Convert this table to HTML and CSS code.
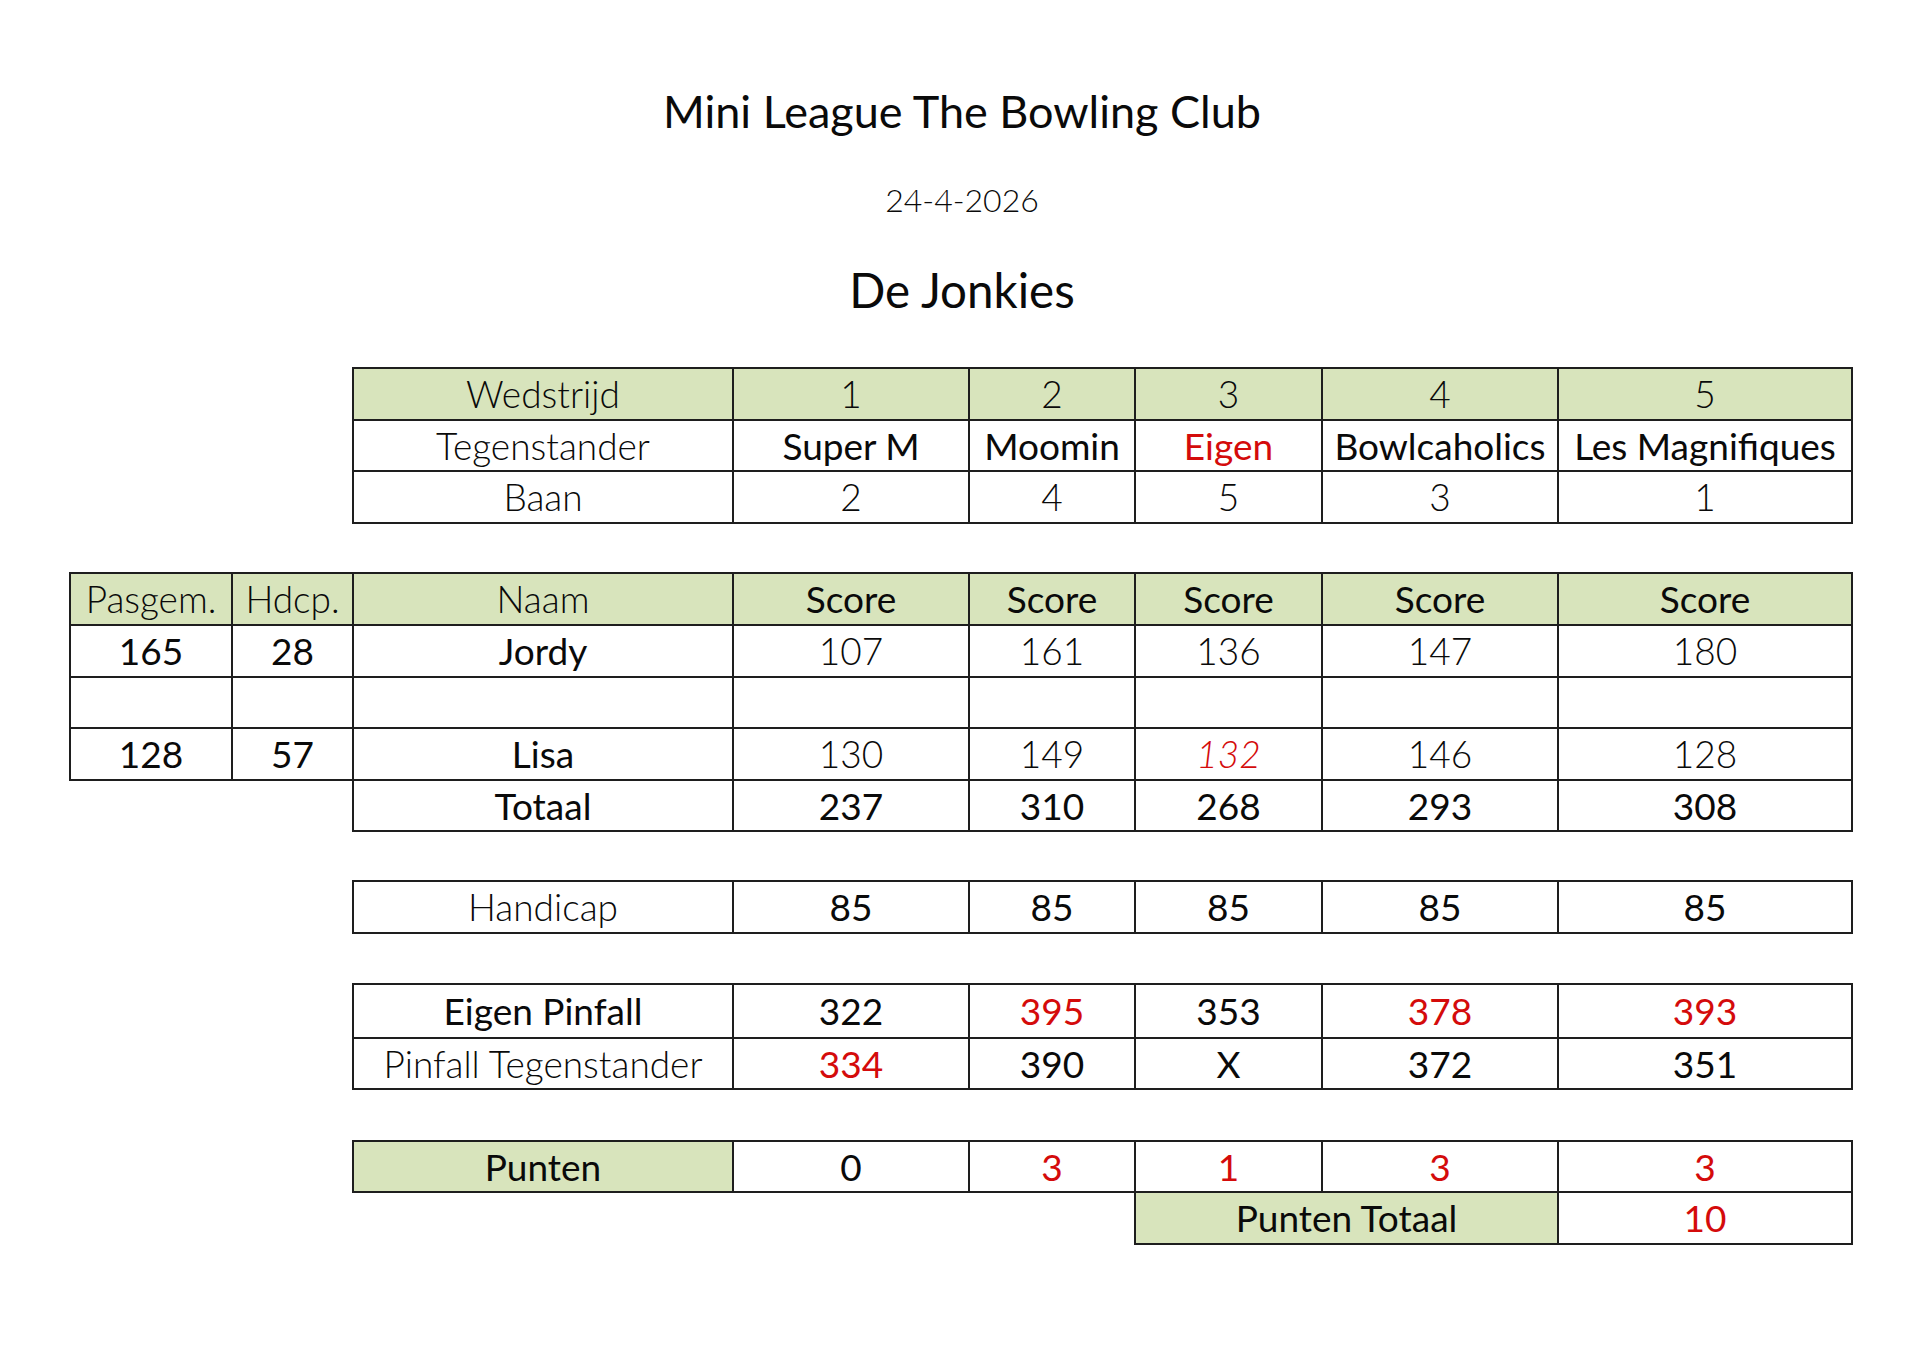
FILE: index.html
```html
<!DOCTYPE html>
<html lang="nl">
<head>
<meta charset="utf-8">
<title>Mini League The Bowling Club</title>
<link rel="stylesheet" href="styles.css">
</head>
<body>
<div class="page">
  <header class="head">
    <h1 class="title">Mini League The Bowling Club</h1>
    <div class="date">24-4-2026</div>
    <h2 class="team">De Jonkies</h2>
  </header>

  <table class="sheet">
    <colgroup>
      <col class="c-pas"><col class="c-hdcp"><col class="c-label">
      <col class="c-m1"><col class="c-m2"><col class="c-m3"><col class="c-m4"><col class="c-m5">
    </colgroup>
    <tbody>
      <tr class="r">
        <td class="e"></td><td class="e"></td>
        <td class="b g lt">Wedstrijd</td>
        <td class="b g lt">1</td><td class="b g lt">2</td><td class="b g lt">3</td><td class="b g lt">4</td><td class="b g lt">5</td>
      </tr>
      <tr class="r">
        <td class="e"></td><td class="e"></td>
        <td class="b lt">Tegenstander</td>
        <td class="b">Super M</td><td class="b">Moomin</td><td class="b red">Eigen</td><td class="b">Bowlcaholics</td><td class="b">Les Magnifiques</td>
      </tr>
      <tr class="r">
        <td class="e"></td><td class="e"></td>
        <td class="b lt">Baan</td>
        <td class="b lt">2</td><td class="b lt">4</td><td class="b lt">5</td><td class="b lt">3</td><td class="b lt">1</td>
      </tr>
      <tr class="sp sp50"><td colspan="8"></td></tr>
      <tr class="r rh">
        <td class="b g lt">Pasgem.</td><td class="b g lt">Hdcp.</td>
        <td class="b g lt">Naam</td>
        <td class="b g">Score</td><td class="b g">Score</td><td class="b g">Score</td><td class="b g">Score</td><td class="b g">Score</td>
      </tr>
      <tr class="r">
        <td class="b">165</td><td class="b">28</td>
        <td class="b">Jordy</td>
        <td class="b lt">107</td><td class="b lt">161</td><td class="b lt">136</td><td class="b lt">147</td><td class="b lt">180</td>
      </tr>
      <tr class="r">
        <td class="b"></td><td class="b"></td><td class="b"></td>
        <td class="b"></td><td class="b"></td><td class="b"></td><td class="b"></td><td class="b"></td>
      </tr>
      <tr class="r">
        <td class="b">128</td><td class="b">57</td>
        <td class="b">Lisa</td>
        <td class="b lt">130</td><td class="b lt">149</td><td class="b lt red it">132</td><td class="b lt">146</td><td class="b lt">128</td>
      </tr>
      <tr class="r">
        <td class="e"></td><td class="e"></td>
        <td class="b">Totaal</td>
        <td class="b">237</td><td class="b">310</td><td class="b">268</td><td class="b">293</td><td class="b">308</td>
      </tr>
      <tr class="sp sp50"><td colspan="8"></td></tr>
      <tr class="r">
        <td class="e"></td><td class="e"></td>
        <td class="b lt">Handicap</td>
        <td class="b">85</td><td class="b">85</td><td class="b">85</td><td class="b">85</td><td class="b">85</td>
      </tr>
      <tr class="sp"><td colspan="8"></td></tr>
      <tr class="r rp">
        <td class="e"></td><td class="e"></td>
        <td class="b">Eigen Pinfall</td>
        <td class="b">322</td><td class="b red">395</td><td class="b">353</td><td class="b red">378</td><td class="b red">393</td>
      </tr>
      <tr class="r">
        <td class="e"></td><td class="e"></td>
        <td class="b lt">Pinfall Tegenstander</td>
        <td class="b red">334</td><td class="b">390</td><td class="b">X</td><td class="b">372</td><td class="b">351</td>
      </tr>
      <tr class="sp"><td colspan="8"></td></tr>
      <tr class="r">
        <td class="e"></td><td class="e"></td>
        <td class="b g">Punten</td>
        <td class="b">0</td><td class="b red">3</td><td class="b red">1</td><td class="b red">3</td><td class="b red">3</td>
      </tr>
      <tr class="r">
        <td class="e"></td><td class="e"></td><td class="e"></td><td class="e"></td><td class="e"></td>
        <td class="b g" colspan="2">Punten Totaal</td>
        <td class="b red">10</td>
      </tr>
    </tbody>
  </table>
</div>
</body>
</html>
```

FILE: styles.css
```css
html, body {
  margin: 0;
  padding: 0;
  background: #ffffff;
}

body {
  font-family: Lato, "Noto Sans", sans-serif;
  color: #0a0a0a;
}

.page {
  width: 1920px;
  height: 1358px;
  box-sizing: border-box;
  padding-top: 84px;
}

.head {
  display: flex;
  flex-direction: column;
  align-items: center;
  padding-left: 4px;
}

.title {
  margin: 0;
  font-size: 45px;
  font-weight: 400;
  line-height: 54px;
  height: 54px;
}

.date {
  margin-top: 42px;
  font-size: 32px;
  font-weight: 300;
  line-height: 40px;
  height: 40px;
}

.team {
  margin: 42px 0 0;
  font-size: 47.5px;
  font-weight: 400;
  line-height: 56px;
  height: 56px;
}

.sheet {
  margin-top: 49px;
  margin-left: 69px;
  border-collapse: collapse;
  table-layout: fixed;
  width: 1782px;
  font-size: 37px;
}

.c-pas { width: 162px; }
.c-hdcp { width: 121px; }
.c-label { width: 380px; }
.c-m1 { width: 236px; }
.c-m2 { width: 166px; }
.c-m3 { width: 187px; }
.c-m4 { width: 236px; }
.c-m5 { width: 294px; }

.sheet td {
  padding: 0;
  text-align: center;
  vertical-align: middle;
  white-space: nowrap;
  overflow: visible;
  font-weight: 400;
  line-height: 1;
}

.r { height: 51.5px; }
.rh { height: 52.5px; }
.rp { height: 53.5px; }
.sp { height: 51.5px; }
.sp50 { height: 50px; }

.sheet td.b {
  border: 2px solid #1e1e1e;
}

.sheet td.g {
  background: #d8e4bc;
}

.sheet td.lt {
  font-weight: 300;
}

.sheet td.red {
  color: #d40b0b;
}

.sheet td.it {
  font-style: italic;
}
```
